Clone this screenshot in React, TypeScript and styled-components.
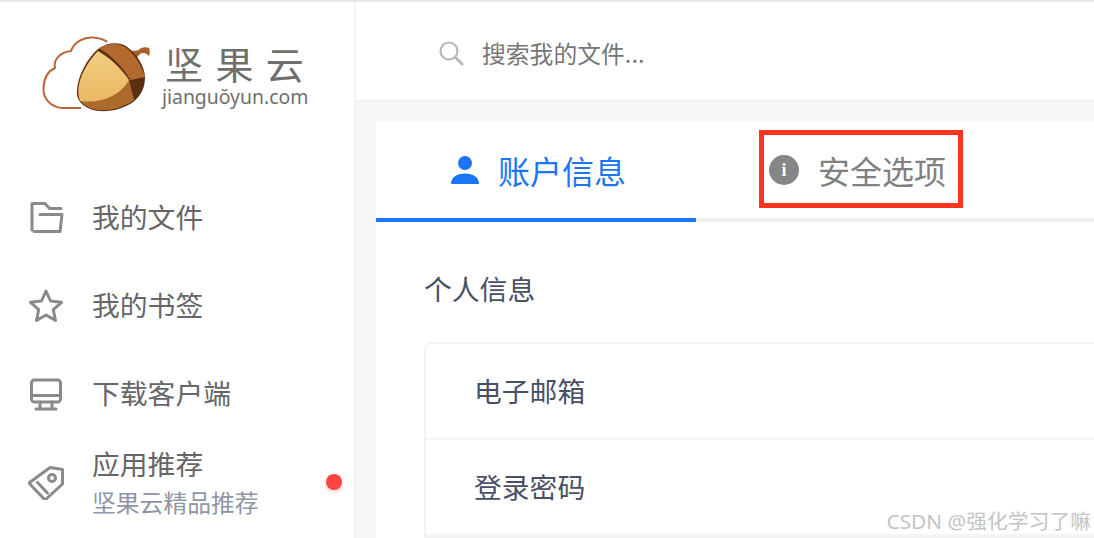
import React from "react";
import styled, { createGlobalStyle } from "styled-components";

const CJK = `"Noto Sans CJK SC", "Noto Sans", sans-serif`;

const Global = createGlobalStyle`
  html, body { margin: 0; padding: 0; background: #f6f7f9; }
  #root { width: 1094px; height: 538px; overflow: hidden; }
  * { box-sizing: border-box; }
`;

const Page = styled.div`
  position: relative;
  width: 1094px;
  height: 538px;
  overflow: hidden;
  display: flex;
  border-top: 2px solid #e6e6e6;
  font-family: ${CJK};
  background: #f6f7f9;
`;

const Sidebar = styled.aside`
  flex: 0 0 356px;
  height: 100%;
  background: #fff;
  border-right: 2px solid #f3f4f6;
  display: flex;
  flex-direction: column;
`;

const Brand = styled.div`
  flex: 0 0 172px;
  display: flex;
  align-items: flex-start;
  padding: 32px 0 0 40px;
`;

const BrandText = styled.div`
  margin-left: 8px;
  margin-top: 10px;
  display: flex;
  flex-direction: column;
  color: #6f6f6c;
`;

const BrandName = styled.div`
  font-size: 38px;
  line-height: 38px;
  letter-spacing: 12.4px;
  margin-left: 5px;
  white-space: nowrap;
`;

const BrandUrl = styled.div`
  font-family: "Noto Sans", sans-serif;
  font-size: 19.4px;
  line-height: 24px;
  margin-top: 3px;
  margin-left: 2px;
  white-space: nowrap;
`;

const Nav = styled.nav`
  display: flex;
  flex-direction: column;
`;

const NavItem = styled.div`
  height: 88px;
  display: flex;
  align-items: center;
  padding: 0 12px 0 28px;
`;

const NavIcon = styled.svg`
  flex: 0 0 36px;
  width: 36px;
  height: 36px;
  fill: none;
  stroke: #8a8a8a;
  stroke-width: 3;
  stroke-linecap: round;
  stroke-linejoin: round;
`;

const NavLabels = styled.div`
  margin-left: 28px;
  flex: 1;
  display: flex;
  flex-direction: column;
  padding-bottom: 4px;
`;

const NavLabel = styled.div`
  font-size: 27.8px;
  line-height: 36px;
  color: #666;
  white-space: nowrap;
`;

const NavSub = styled.div`
  font-size: 23.8px;
  line-height: 34px;
  margin: 4px 0 -4px;
  color: #8f95a5;
  white-space: nowrap;
`;

const Dot = styled.span`
  width: 16px;
  height: 16px;
  border-radius: 50%;
  background: #ff4444;
  box-shadow: 0 2px 4px rgba(255, 68, 68, 0.3);
`;

const Main = styled.main`
  flex: 1;
  min-width: 0;
  display: flex;
  flex-direction: column;
`;

const Header = styled.header`
  flex: 0 0 100px;
  background: #fff;
  border-bottom: 2px solid #f0f1f3;
  display: flex;
  align-items: center;
  padding: 3px 0 0 82px;
`;

const SearchText = styled.span`
  margin-left: 18px;
  font-size: 23.8px;
  color: #777;
  white-space: nowrap;
`;

const Card = styled.section`
  flex: 1;
  margin: 20px 0 0 20px;
  background: #fff;
  display: flex;
  flex-direction: column;
`;

const Tabs = styled.div`
  display: flex;
  height: 100px;
  border-bottom: 4px solid #eeeeee;
`;

const Tab = styled.div<{ $active?: boolean }>`
  position: relative;
  flex: 0 0 320px;
  height: 100px;
  padding: 0 0 0 74px;
  display: flex;
  align-items: center;
  font-size: 32px;
  white-space: nowrap;
  color: ${(p) => (p.$active ? "#1b76f5" : "#808080")};
  border-bottom: 4px solid ${(p) => (p.$active ? "#1b76f5" : "transparent")};
`;

const TabIcon = styled.svg`
  flex: 0 0 30px;
  width: 30px;
  height: 30px;
  margin-right: 18px;
`;

const InfoBadge = styled.span`
  flex: 0 0 30px;
  width: 30px;
  height: 30px;
  margin-right: 19px;
  margin-left: -1px;
  border-radius: 50%;
  background: #868686;
  color: #fff;
  font-family: "Liberation Serif", serif;
  font-weight: 700;
  font-size: 18px;
  line-height: 30px;
  text-align: center;
`;

const Annotation = styled.div`
  position: absolute;
  left: 63px;
  top: 8px;
  width: 204px;
  height: 78px;
  border: 5px solid #ff3320;
`;

const Body = styled.div`
  padding: 46px 0 0 48px;
`;

const SectionTitle = styled.div`
  font-size: 27.8px;
  line-height: 40px;
  color: #4a5064;
`;

const List = styled.div`
  margin-top: 34px;
  border: 2px solid #f2f2f2;
  border-right: none;
  border-radius: 8px 0 0 0;
`;

const Row = styled.div`
  height: 96px;
  display: flex;
  align-items: center;
  padding: 0 0 2px 48px;
  font-size: 27.8px;
  color: #4a5064;
  border-bottom: 2px solid #f5f5f5;
`;

const Watermark = styled.div`
  position: absolute;
  right: 3px;
  bottom: 3px;
  font-family: "Noto Sans", "Noto Sans CJK SC", sans-serif;
  font-size: 20.8px;
  line-height: 28px;
  color: #c4c4c4;
  white-space: nowrap;
`;

const Logo = () => (
  <svg width="112" height="80" viewBox="40 34 112 80" style={{ flex: "0 0 112px" }}>
    <defs>
      <linearGradient id="nutFace" x1="0" y1="0" x2="0" y2="1">
        <stop offset="0" stopColor="#f3cd80" />
        <stop offset="1" stopColor="#e9b864" />
      </linearGradient>
    </defs>
    <path
      d="M81 108 L62 108 C50 107 43 98 43.500 88 C44 78 48 71 55 68 C53 60 60 52 71 51 C74 42 84 37 93 37.500 C99 38 104 39 107 42"
      fill="none"
      stroke="#b9663a"
      strokeWidth="2"
    />
    <path
      d="M132 50 C136 52 139 50 141 48 C144 47 147 47 149 48 C150 51 150 53 149 56 C146 53 143 52 140 54 C138 56 137 58 136 59 Z"
      fill="#a8622c"
    />
    <path
      d="M98 49 C108 42 118 42 126 46 C136 53 145 66 145 78 C145 92 136 102 126 106 C114 112 98 113 88 108 C80 104 76 98 77 90 C78 76 86 60 98 49 Z"
      fill="#5c2f12"
    />
    <path
      d="M98 52 C88 61 79 76 78 90 C77 97 81 104 88 107 C98 112 114 111 125 105 C128 104 131 102 134 100 L129 80 Z"
      fill="#ad6a2d"
    />
    <path
      d="M98 51 C88 61 79 77 78.500 90 C78.500 94 79 98 80 101 C100 104 120 96 129 80 C120 67 110 58 98 51 Z"
      fill="url(#nutFace)"
    />
    <path
      d="M99 48 C108 43 118 43 125 47 C134 53 142 66 145 77 L130.500 80 C123 67 112 56 99 48 Z"
      fill="#b4692f"
    />
  </svg>
);

const SearchIcon = () => (
  <svg width="26" height="26" viewBox="0 0 26 26" fill="none" stroke="#b8b8b8" strokeWidth="2.2" strokeLinecap="round">
    <circle cx="11" cy="11" r="8.500" />
    <path d="M17.500 17.500 L24 24" strokeWidth="3" />
  </svg>
);

export default function App() {
  return (
    <Page>
      <Global />
      <Sidebar>
        <Brand>
          <Logo />
          <BrandText>
            <BrandName>坚果云</BrandName>
            <BrandUrl>jianguŏyun.com</BrandUrl>
          </BrandText>
        </Brand>
        <Nav>
          <NavItem>
            <NavIcon viewBox="0 0 36 36">
              <path d="M4 30 V3.500 H17 L21.500 8.500 H33" />
              <path d="M12 14.500 H34 L32 31.500 H6" />
            </NavIcon>
            <NavLabels><NavLabel>我的文件</NavLabel></NavLabels>
          </NavItem>
          <NavItem>
            <NavIcon viewBox="0 0 36 36">
              <path d="M18 3 L22.500 13 L33.500 14.300 L25.300 21.700 L27.500 32.500 L18 27 L8.500 32.500 L10.700 21.700 L2.500 14.300 L13.500 13 Z" />
            </NavIcon>
            <NavLabels><NavLabel>我的书签</NavLabel></NavLabels>
          </NavItem>
          <NavItem>
            <NavIcon viewBox="0 0 36 36">
              <rect x="3.500" y="4" width="29" height="22" rx="3" />
              <path d="M3.500 19.500 H32.500 M12 26 V32.500 M24 26 V32.500 M8 33 H28" />
            </NavIcon>
            <NavLabels><NavLabel>下载客户端</NavLabel></NavLabels>
          </NavItem>
          <NavItem>
            <NavIcon viewBox="0 0 36 36">
              <path d="M22 3.500 L34.500 5.500 L34.500 20 L17 36 L1 19 Z" />
              <circle cx="24" cy="14" r="3.500" />
              <path d="M9.500 18.500 L19.500 29" />
            </NavIcon>
            <NavLabels>
              <NavLabel>应用推荐</NavLabel>
              <NavSub>坚果云精品推荐</NavSub>
            </NavLabels>
            <Dot />
          </NavItem>
        </Nav>
      </Sidebar>
      <Main>
        <Header>
          <SearchIcon />
          <SearchText>搜索我的文件...</SearchText>
        </Header>
        <Card>
          <Tabs>
            <Tab $active>
              <TabIcon viewBox="0 0 30 30" fill="#1b76f5">
                <circle cx="15" cy="8" r="7" />
                <path d="M1 29 C1 22 7 18.500 15 18.500 C23 18.500 29 22 29 29 Z" />
              </TabIcon>
              账户信息
            </Tab>
            <Tab>
              <InfoBadge>i</InfoBadge>
              安全选项
              <Annotation />
            </Tab>
          </Tabs>
          <Body>
            <SectionTitle>个人信息</SectionTitle>
            <List>
              <Row>电子邮箱</Row>
              <Row>登录密码</Row>
            </List>
          </Body>
        </Card>
      </Main>
      <Watermark>CSDN @强化学习了嘛</Watermark>
    </Page>
  );
}
